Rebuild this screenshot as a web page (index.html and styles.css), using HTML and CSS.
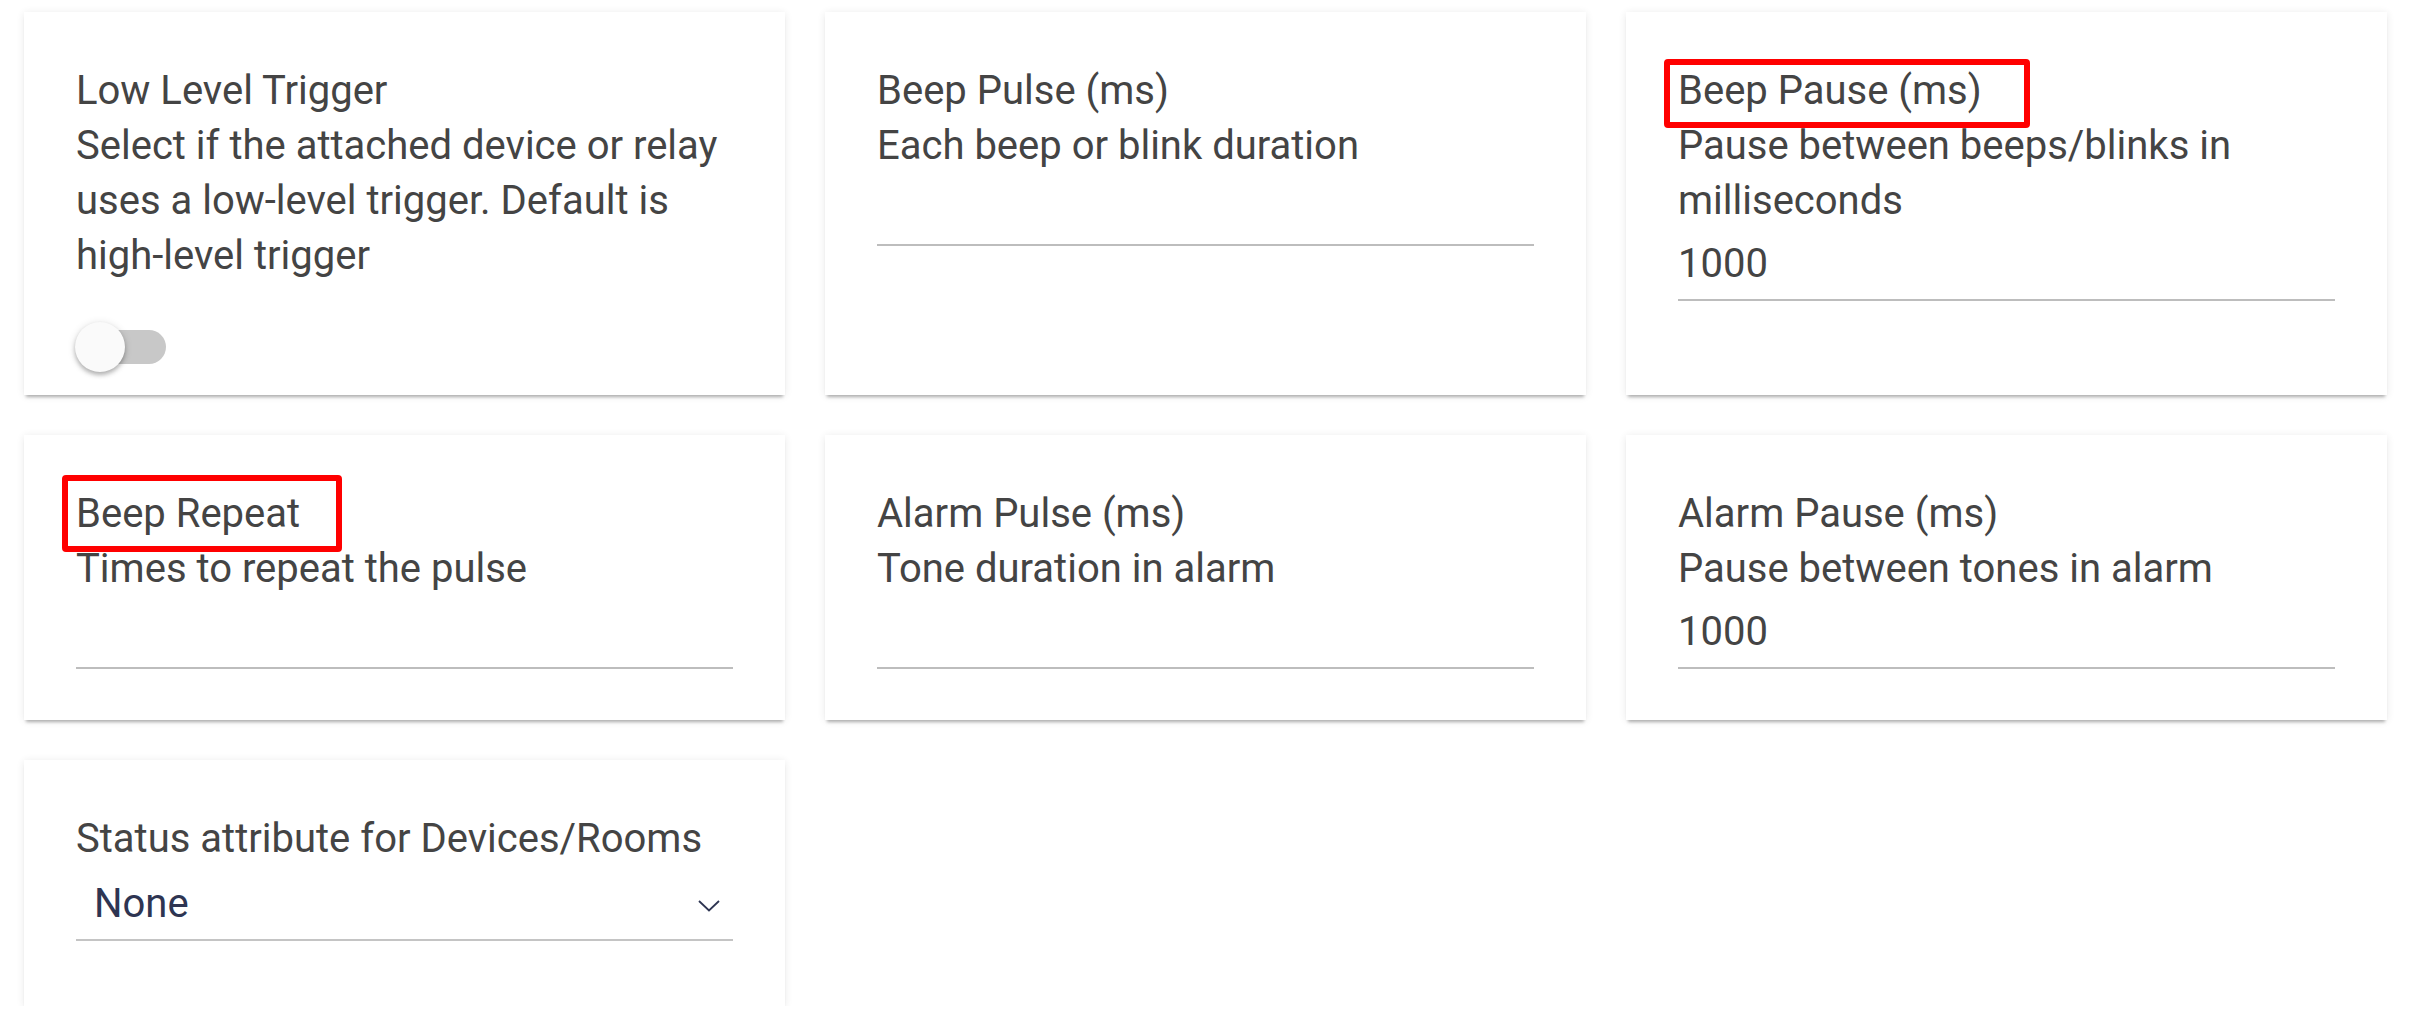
FILE: index.html
```html
<!DOCTYPE html>
<html lang="en">
<head>
  <meta charset="UTF-8">
  <title>Device Settings</title>
  <link rel="stylesheet" href="styles.css">
</head>
<body>
  <div class="grid">
    <div class="card card-switch">
      <div class="title">Low Level Trigger</div>
      <div class="desc">Select if the attached device or relay uses a low-level trigger. Default is high-level trigger</div>
      <div class="switch">
        <div class="track"></div>
        <div class="thumb"></div>
      </div>
    </div>

    <div class="card">
      <div class="title">Beep Pulse (ms)</div>
      <div class="desc">Each beep or blink duration</div>
      <input class="field" type="number" value="">
    </div>

    <div class="card">
      <div class="mark mark-pause"></div>
      <div class="title">Beep Pause (ms)</div>
      <div class="desc">Pause between beeps/blinks in milliseconds</div>
      <input class="field" type="number" value="1000">
    </div>

    <div class="card">
      <div class="mark mark-repeat"></div>
      <div class="title">Beep Repeat</div>
      <div class="desc">Times to repeat the pulse</div>
      <input class="field" type="number" value="">
    </div>

    <div class="card">
      <div class="title">Alarm Pulse (ms)</div>
      <div class="desc">Tone duration in alarm</div>
      <input class="field" type="number" value="">
    </div>

    <div class="card">
      <div class="title">Alarm Pause (ms)</div>
      <div class="desc">Pause between tones in alarm</div>
      <input class="field" type="number" value="1000">
    </div>

    <div class="card card-select">
      <div class="title">Status attribute for Devices/Rooms</div>
      <div class="select">
        <span>None</span>
        <svg class="chevron" width="22" height="12" viewBox="0 0 22 12">
          <path d="M1 1 L11 10.5 L21 1" fill="none" stroke="#2e3552" stroke-width="1.8"/>
        </svg>
      </div>
    </div>
  </div>
</body>
</html>
```

FILE: styles.css
```css
body {
  margin: 0;
  background: #fff;
  font-family: Roboto, "Noto Sans", Arial, sans-serif;
  font-size: 40px;
  line-height: 55px;
  color: #444;
}
.grid {
  display: grid;
  grid-template-columns: repeat(3, 761px);
  grid-auto-rows: auto;
  gap: 40px;
  padding: 12px 0 0 24px;
  align-items: start;
}
.card {
  position: relative;
  box-sizing: border-box;
  background: #fff;
  padding: 51px 52px;
  box-shadow: 0 4px 3px -2px rgba(0,0,0,0.28), 0 1px 8px rgba(0,0,0,0.09);
}
.grid > .card {
  align-self: stretch;
}
.card-switch {
  padding-bottom: 23px;
}
.card-select {
  height: 246px;
  align-self: start;
}
.field {
  display: block;
  width: 100%;
  box-sizing: border-box;
  height: 65px;
  margin: 8px 0 0;
  padding: 0 0 8px;
  border: none;
  border-bottom: 2px solid #bdbdbd;
  background: transparent;
  font-family: inherit;
  font-size: 40px;
  line-height: 55px;
  color: #444;
  outline: none;
  -moz-appearance: textfield;
}
.field::-webkit-inner-spin-button,
.field::-webkit-outer-spin-button {
  -webkit-appearance: none;
  margin: 0;
}
.switch {
  position: relative;
  width: 92px;
  height: 50px;
  margin: 39px 0 0 -1px;
}
.track {
  position: absolute;
  left: 2px;
  top: 8px;
  width: 89px;
  height: 34px;
  border-radius: 17px;
  background: #c8c8c8;
}
.thumb {
  position: absolute;
  left: 0;
  top: 0;
  width: 50px;
  height: 50px;
  border-radius: 50%;
  background: #fafafa;
  box-shadow: 0 3px 4px rgba(0,0,0,0.25), 0 1px 8px rgba(0,0,0,0.12);
}
.select {
  display: flex;
  justify-content: space-between;
  align-items: center;
  height: 55px;
  margin-top: 10px;
  padding: 0 13px 8px 18px;
  border-bottom: 2px solid #c4c4c4;
  color: #2e3552;
}
.chevron {
  margin-top: 5px;
}
.mark {
  position: absolute;
  left: 38px;
  box-sizing: border-box;
  border: 6px solid #f00;
  border-radius: 4px;
}
.mark-pause {
  top: 47px;
  width: 366px;
  height: 69px;
}
.mark-repeat {
  top: 40px;
  width: 280px;
  height: 77px;
}
```
